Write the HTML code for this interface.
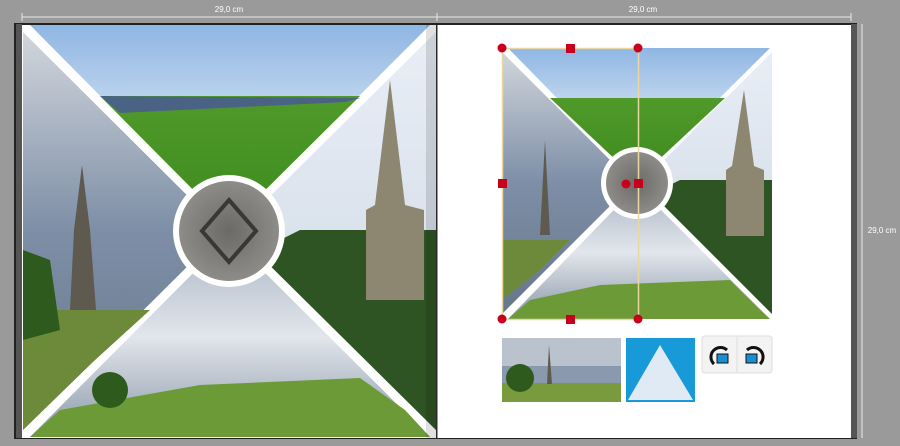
<!DOCTYPE html>
<html><head><style>
html,body{margin:0;padding:0;background:#9a9a9a;width:900px;height:446px;overflow:hidden;font-family:"Liberation Sans",sans-serif}
</style></head><body>
<svg width="900" height="446" viewBox="0 0 900 446" xmlns="http://www.w3.org/2000/svg">
<defs>
<linearGradient id="sky" x1="0" y1="0" x2="0" y2="1"><stop offset="0" stop-color="#8fb6e3"/><stop offset="0.6" stop-color="#d6e4f3"/><stop offset="1" stop-color="#eef3f8"/></linearGradient>
<linearGradient id="grass" x1="0" y1="0" x2="0" y2="1"><stop offset="0" stop-color="#4f9a2a"/><stop offset="1" stop-color="#3f8a1e"/></linearGradient>
<linearGradient id="lsky" x1="0" y1="0" x2="0" y2="1"><stop offset="0" stop-color="#d2d6dc"/><stop offset="0.5" stop-color="#7d8ea6"/><stop offset="1" stop-color="#66778c"/></linearGradient>
<linearGradient id="rsky" x1="0" y1="0" x2="0" y2="1"><stop offset="0" stop-color="#e8eef6"/><stop offset="1" stop-color="#cdd7e3"/></linearGradient>
<linearGradient id="bsky" x1="0" y1="0" x2="0" y2="1"><stop offset="0" stop-color="#a9b5c4"/><stop offset="0.5" stop-color="#e2e6ec"/><stop offset="1" stop-color="#8a98a8"/></linearGradient>
<radialGradient id="wood" cx="0.5" cy="0.5" r="0.5"><stop offset="0" stop-color="#6c6a66"/><stop offset="1" stop-color="#8e8c88"/></radialGradient>
</defs>
<line x1="22" y1="17" x2="851" y2="17" stroke="#e8e8e8" stroke-width="1"/>
<line x1="22" y1="13" x2="22" y2="21" stroke="#e8e8e8"/><line x1="437" y1="13" x2="437" y2="21" stroke="#e8e8e8"/><line x1="851" y1="13" x2="851" y2="21" stroke="#e8e8e8"/>
<line x1="862" y1="24" x2="862" y2="438" stroke="#e8e8e8"/>
<text x="229" y="12" font-size="8" fill="#fff" text-anchor="middle" font-family="Liberation Sans">29,0 cm</text>
<text x="643" y="12" font-size="8" fill="#fff" text-anchor="middle" font-family="Liberation Sans">29,0 cm</text>
<text x="882" y="233" font-size="8" fill="#fff" text-anchor="middle" font-family="Liberation Sans">29,0 cm</text>
<rect x="14" y="23" width="843" height="416" fill="#222"/>
<rect x="16" y="24" width="6" height="414" fill="#555"/>
<rect x="851" y="24" width="6" height="414" fill="#555"/>
<rect x="22" y="25" width="414" height="413" fill="#fff"/>
<polygon points="30,25 430,25 229,226" fill="url(#sky)"/>
<polygon points="100,96 360,96 229,226" fill="url(#grass)"/>
<polygon points="100,96 360,98 345,102 120,113" fill="#4a6283"/>
<polygon points="23,32 223,231 23,430" fill="url(#lsky)"/>
<polygon points="23,310 150,310 94,361 23,430" fill="#6c8a3a"/>
<polygon points="23,250 50,260 60,330 23,340" fill="#2f5a1e"/>
<polygon points="70,310 74,230 82,165 90,230 96,310" fill="#5f5a4f"/>
<polygon points="436,32 235,231 436,430" fill="url(#rsky)"/>
<polygon points="436,230 300,230 280,240 235,231 436,430" fill="#2f5424"/>
<polygon points="366,300 366,210 375,205 390,80 405,205 424,210 424,300" fill="#8d8670"/>
<polygon points="30,437 229,237 430,437" fill="url(#bsky)"/>
<polygon points="30,437 60,410 200,385 360,378 405,410 430,437" fill="#6c9a36"/>
<circle cx="110" cy="390" r="18" fill="#2f5a1e"/>
<circle cx="229" cy="231" r="56" fill="#fff"/>
<circle cx="229" cy="231" r="50" fill="url(#wood)"/>
<path d="M229 200 L256 231 L229 262 L202 231 Z" fill="none" stroke="#3a3836" stroke-width="4"/>
<rect x="426" y="25" width="12" height="413" fill="#000" opacity="0.12"/>
<rect x="437" y="25" width="414" height="413" fill="#fff"/>
<line x1="437" y1="25" x2="437" y2="438" stroke="#333"/>
<polygon points="508,48 770,48 637,180" fill="url(#sky)"/>
<polygon points="550,98 725,98 637,180" fill="url(#grass)"/>
<polygon points="502,52 633,183 502,314" fill="url(#lsky)"/>
<polygon points="502,240 570,240 540,270 502,300" fill="#6c8a3a"/>
<polygon points="540,235 545,140 550,235" fill="#5f5a4f"/>
<polygon points="772,52 641,183 772,314" fill="url(#rsky)"/>
<polygon points="772,180 680,180 660,190 641,183 772,314" fill="#2f5424"/>
<polygon points="726,236 726,170 732,166 744,90 754,166 764,170 764,236" fill="#8d8670"/>
<polygon points="508,319 637,186 770,319" fill="url(#bsky)"/>
<polygon points="508,319 530,300 600,285 730,280 760,310 770,319" fill="#6c9a36"/>
<circle cx="637" cy="183" r="36" fill="#fff"/>
<circle cx="637" cy="183" r="31" fill="url(#wood)"/>
<rect x="502.5" y="48.5" width="136" height="271" fill="none" stroke="#e8d8a0" stroke-width="1.5"/>
<g fill="#c8001e">
<circle cx="502" cy="48" r="4.5"/><circle cx="638" cy="48" r="4.5"/><circle cx="502" cy="319" r="4.5"/><circle cx="638" cy="319" r="4.5"/>
<rect x="566" y="44" width="9" height="9"/><rect x="566" y="315" width="9" height="9"/><rect x="498" y="179" width="9" height="9"/><rect x="634" y="179" width="9" height="9"/>
<circle cx="626" cy="184" r="4.5"/>
</g>
<rect x="502" y="338" width="119" height="64" fill="#8a99ad"/>
<rect x="502" y="338" width="119" height="28" fill="#b9c2cd"/>
<rect x="502" y="383" width="119" height="19" fill="#7a9a3e"/>
<circle cx="520" cy="378" r="14" fill="#2f5a1e"/>
<polygon points="547,384 549,345 552,384" fill="#5f5a4f"/>
<rect x="626" y="338" width="69" height="64" fill="#199ad8"/>
<polygon points="660,345 693,400 628,400" fill="#dfeaf4"/>
<rect x="702" y="336" width="70" height="37" rx="3" fill="#f3f3f3" stroke="#ddd"/>
<line x1="737" y1="337" x2="737" y2="372" stroke="#ddd"/>
<path d="M714 364 A9 9 0 1 1 727 350" fill="none" stroke="#111" stroke-width="3"/>
<rect x="717" y="354" width="11" height="9" fill="#1a8fd0" stroke="#111"/>
<path d="M760 364 A9 9 0 1 0 747 350" fill="none" stroke="#111" stroke-width="3"/>
<rect x="746" y="354" width="11" height="9" fill="#1a8fd0" stroke="#111"/>
</svg>
</body></html>
